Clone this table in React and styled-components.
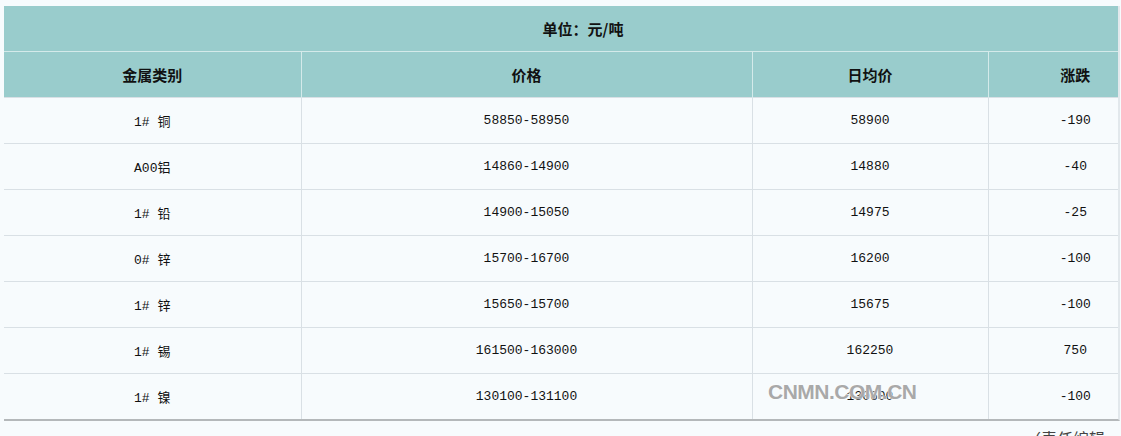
import React from "react";
import styled, { createGlobalStyle } from "styled-components";

const Global = createGlobalStyle`
  html, body { margin: 0; padding: 0; background: #f7fbfd; }
  body { font-family: "Liberation Mono", "Noto Sans CJK SC", monospace; color: #111; }
`;

const Page = styled.div`
  padding: 6px 0 0 4px;
  position: relative;
  height: 430px;
  overflow: hidden;
`;

const Frame = styled.div`
  width: 1114px;
  overflow: hidden;
  border-right: 2px solid #e2e8ec;
  border-bottom: 2px solid #b4b8ba;
`;

const Table = styled.table`
  width: 1158px;
  border-collapse: collapse;
  table-layout: fixed;
`;

const Caption = styled.th`
  height: 45px;
  background: #99cccc;
  font-family: "Noto Sans CJK SC", sans-serif;
  font-weight: 700;
  font-size: 15px;
  text-align: center;
  padding: 0;
  border-bottom: 1px solid #d4eaea;
`;

const HeadCell = styled.th`
  height: 45px;
  background: #99cccc;
  font-family: "Noto Sans CJK SC", sans-serif;
  font-weight: 700;
  font-size: 15px;
  text-align: center;
  padding: 0;
  border-left: 1px solid #d4eaea;
  &:first-child { border-left: none; }
`;

const Cell = styled.td`
  height: 45px;
  background: #f7fbfd;
  font-family: "Liberation Mono", "Noto Sans CJK SC", monospace;
  font-size: 13px;
  text-align: center;
  padding: 0;
  border-top: 1px solid #d9e0e5;
  border-left: 1px solid #d9e0e5;
  &:first-child { border-left: none; }
`;

const Watermark = styled.div`
  position: absolute;
  left: 768px;
  top: 380px;
  font-family: "Liberation Sans", Arial, sans-serif;
  font-weight: 700;
  font-size: 21px;
  color: #a9a9a9;
  letter-spacing: -0.5px;
  text-shadow: 0 0 2px #fff, 0 0 1px #fff;
  pointer-events: none;
`;

const Footer = styled.div`
  text-align: right;
  padding-right: 16px;
  margin-top: 5px;
  font-family: "Noto Sans CJK SC", sans-serif;
  font-size: 16px;
  color: #444;
`;

const rows = [
  ["1# 铜", "58850-58950", "58900", "-190"],
  ["A00铝", "14860-14900", "14880", "-40"],
  ["1# 铅", "14900-15050", "14975", "-25"],
  ["0# 锌", "15700-16700", "16200", "-100"],
  ["1# 锌", "15650-15700", "15675", "-100"],
  ["1# 锡", "161500-163000", "162250", "750"],
  ["1# 镍", "130100-131100", "130600", "-100"],
];

export default function App() {
  return (
    <>
      <Global />
      <Page>
        <Frame>
          <Table>
            <colgroup>
              <col style={{ width: 297 }} />
              <col style={{ width: 451 }} />
              <col style={{ width: 236 }} />
              <col style={{ width: 174 }} />
            </colgroup>
            <thead>
              <tr>
                <Caption colSpan={4}>单位：元/吨</Caption>
              </tr>
              <tr>
                <HeadCell>金属类别</HeadCell>
                <HeadCell>价格</HeadCell>
                <HeadCell>日均价</HeadCell>
                <HeadCell>涨跌</HeadCell>
              </tr>
            </thead>
            <tbody>
              {rows.map((r, i) => (
                <tr key={i}>
                  {r.map((c, j) => (
                    <Cell key={j}>{c}</Cell>
                  ))}
                </tr>
              ))}
            </tbody>
          </Table>
        </Frame>
        <Footer>（责任编辑</Footer>
        <Watermark>CNMN.COM.CN</Watermark>
      </Page>
    </>
  );
}
